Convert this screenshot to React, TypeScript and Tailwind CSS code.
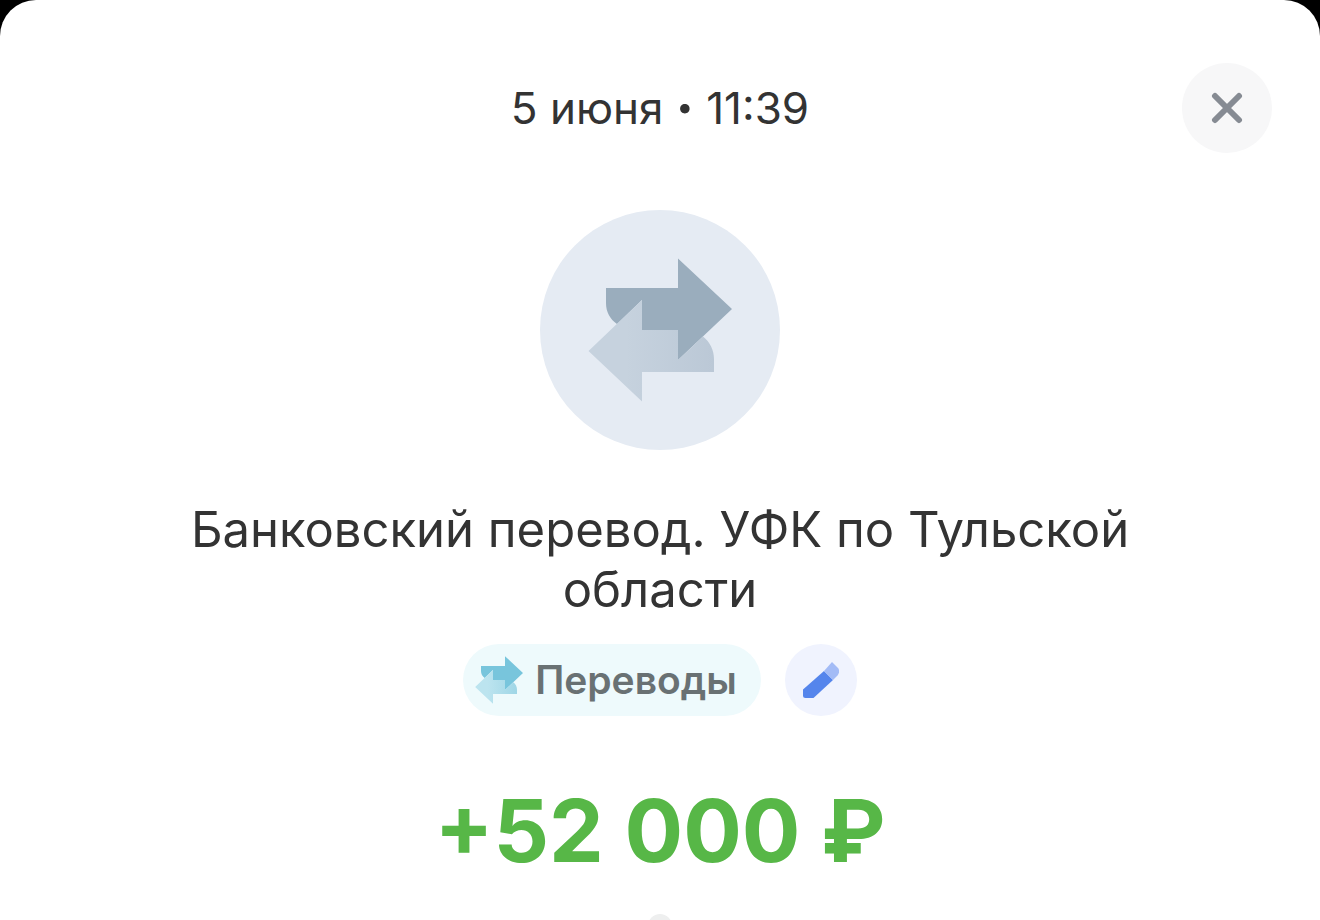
import { useId } from "react";

const transaction = {
  date: "5 июня",
  time: "11:39",
  title: "Банковский перевод. УФК по Тульской области",
  category: "Переводы",
  amount: "+52 000 ₽",
};

function TransferIcon({
  className,
  front,
  backFrom,
  backTo,
}: {
  className: string;
  front: string;
  backFrom: string;
  backTo: string;
}) {
  const id = useId();

  return (
    <svg viewBox="48 48 144 144" className={className} aria-hidden="true">
      <defs>
        <linearGradient id={id} x1="0" y1="0" x2="1" y2="0">
          <stop offset="0.3" stopColor={backFrom} />
          <stop offset="1" stopColor={backTo} />
        </linearGradient>
      </defs>
      <path
        d="M66 78H138V48.500L192 99L138 150V120H102V90L77 114C70 109 66 102 66 93Z"
        fill={front}
      />
      <path
        d="M102 90L48.500 141L102 191.500V162H174V149C174 140 170 132 163 126.500L138 150V120H102Z"
        fill={`url(#${id})`}
      />
    </svg>
  );
}

function PencilIcon() {
  return (
    <svg viewBox="0 0 36 36" className="size-9" aria-hidden="true">
      <path d="M21 9L30 18L10.500 36H2.500Q0 36 0 33.500V27.500Z" fill="#5585ec" />
      <path d="M29 0L34.500 5.500Q38 9 34.500 13.500L30 18L21 9Z" fill="#a3bbf6" />
    </svg>
  );
}

function CloseIcon() {
  return (
    <svg viewBox="0 0 32 32" className="size-8" aria-hidden="true">
      <path
        d="M4 4L28 28M28 4L4 28"
        stroke="#868b93"
        strokeWidth="6"
        strokeLinecap="round"
      />
    </svg>
  );
}

export default function App() {
  return (
    <div className="h-screen overflow-hidden bg-black font-['Inter','Noto_Sans',sans-serif]">
      <main className="flex min-h-full flex-col items-center rounded-t-[36px] bg-white px-12 pt-[63px] text-[#333333]">
        <header className="grid w-full grid-cols-[1fr_auto_1fr] items-center">
          <time className="col-start-2 flex gap-3 text-[44px] leading-[60px]">
            <span>{transaction.date}</span>
            <span className="text-[56px] font-bold">·</span>
            <span>{transaction.time}</span>
          </time>
          <button
            type="button"
            aria-label="Закрыть"
            className="flex size-[90px] items-center justify-center justify-self-end rounded-full bg-[#f7f7f8]"
          >
            <CloseIcon />
          </button>
        </header>

        {/* Operation logo */}
        <div className="mt-[57px] flex size-60 shrink-0 items-center justify-center rounded-full bg-[#e5ebf3]">
          <TransferIcon className="size-36" front="#9aadbd" backFrom="#c6d2de" backTo="#bbc8d6" />
        </div>

        <h1 className="mt-[50px] max-w-5xl text-center text-[49px] leading-[60px]">
          {transaction.title}
        </h1>

        {/* Category */}
        <div className="mt-6 flex items-center gap-6">
          <button
            type="button"
            className="flex h-[72px] items-center gap-3 rounded-full bg-[#eefafc] pr-6 pl-3 text-[39px] font-semibold text-[#697173]"
          >
            <TransferIcon className="size-12" front="#78c5dc" backFrom="#bce4ef" backTo="#9fd6e6" />
            {transaction.category}
          </button>
          <button
            type="button"
            aria-label="Изменить категорию"
            className="flex size-[72px] items-center justify-center rounded-full bg-[#f0f3fe]"
          >
            <PencilIcon />
          </button>
        </div>

        <p className="mt-16 text-[87px] leading-[102px] font-bold whitespace-nowrap text-[#57b747]">
          {transaction.amount}
        </p>

        <span className="mt-8 size-6 shrink-0 rounded-full bg-[#eeefef]" />
      </main>
    </div>
  );
}
